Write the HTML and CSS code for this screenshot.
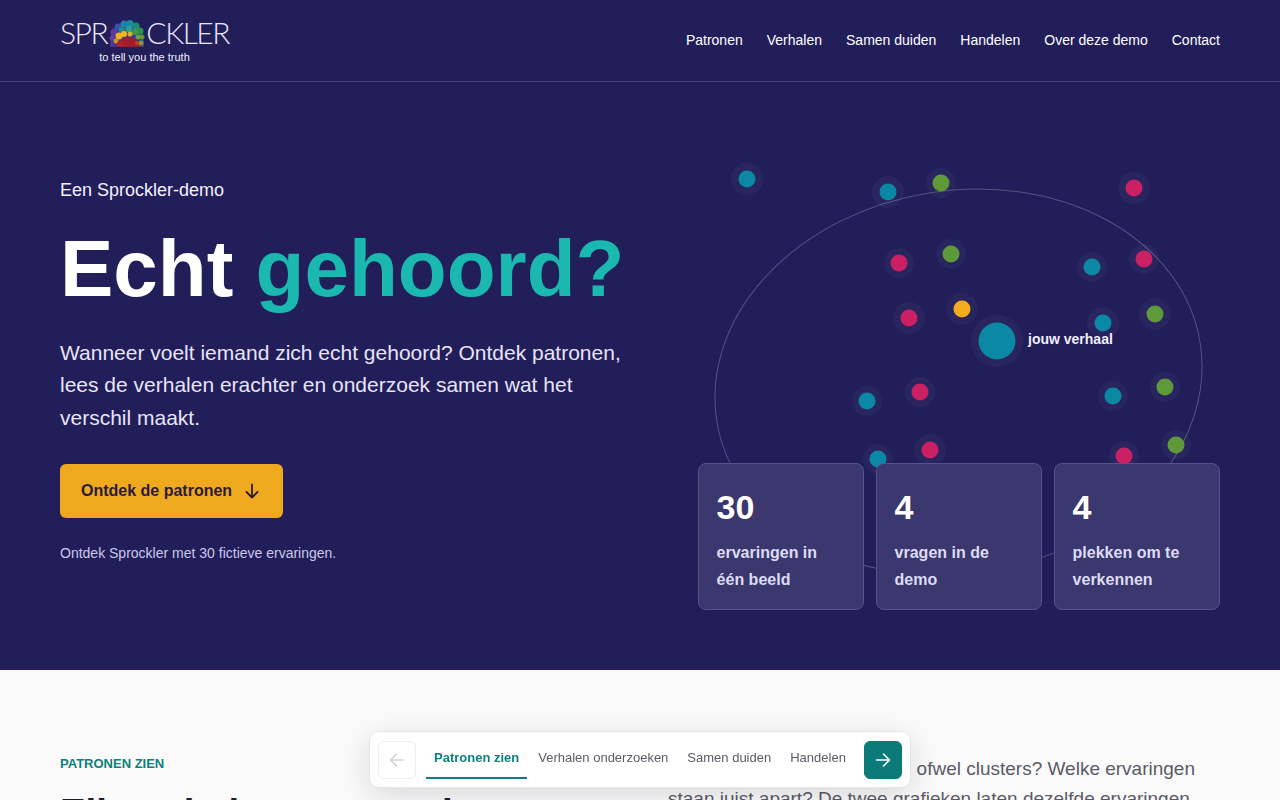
FILE: index.html
```html
<!DOCTYPE html>
<html lang="nl">
<head>
<meta charset="utf-8">
<title>Echt gehoord? Een Sprockler-demo</title>
<link rel="stylesheet" href="styles.css">
</head>
<body>
<header class="site-header">
  <a class="logo" href="#">
    <span class="logo-word">
      <span>SPR</span>
      <svg class="logo-mark" width="36" height="28" viewBox="0 0 36 28" aria-hidden="true">
        <g class="logo-blur">
          <path d="M1 27 Q0 3 18 1 Q36 3 35 27 Z" fill="#3c3a86"/>
          <circle cx="5" cy="12" r="3.500" fill="#5b3c9c"/><circle cx="3" cy="18" r="2.500" fill="#6a3f9e"/>
          <circle cx="4" cy="24" r="2.500" fill="#4a3a8c"/><circle cx="9" cy="7" r="3.500" fill="#3d4ea8"/>
          <circle cx="15" cy="4" r="3.500" fill="#1f7fb0"/><circle cx="21" cy="3.500" r="3.500" fill="#138e9c"/>
          <circle cx="27" cy="6" r="3.500" fill="#1d8d78"/><circle cx="31" cy="11" r="3.500" fill="#2d8f52"/>
          <circle cx="33" cy="17" r="2.500" fill="#5f9a36"/><circle cx="32" cy="23" r="2.500" fill="#8a9a2c"/>
          <circle cx="13" cy="10" r="3" fill="#1f8e8e"/><circle cx="20" cy="9" r="3.500" fill="#2aa08c"/>
          <circle cx="26" cy="12" r="3" fill="#3f9a58"/><circle cx="29" cy="17" r="2.500" fill="#72a038"/>
          <circle cx="10" cy="16" r="3.500" fill="#f2b21e"/><circle cx="15" cy="14" r="3" fill="#f4b820"/>
          <circle cx="7" cy="21" r="2.500" fill="#e08a24"/><circle cx="21" cy="14" r="2.500" fill="#d8b02a"/>
          <path d="M8 27 Q10 18 19 17 Q29 17 31 27 Z" fill="#a31c2a"/>
          <circle cx="11" cy="24" r="3" fill="#b32030"/><circle cx="28" cy="23" r="2" fill="#b8481f"/>
        </g>
      </svg>
      <span>CKLER</span>
    </span>
    <span class="logo-tag">to tell you the truth</span>
  </a>
  <nav class="main-nav">
    <a href="#">Patronen</a>
    <a href="#">Verhalen</a>
    <a href="#">Samen duiden</a>
    <a href="#">Handelen</a>
    <a href="#">Over deze demo</a>
    <a href="#">Contact</a>
  </nav>
</header>

<section class="hero">
  <div class="hero-copy">
    <p class="hero-kicker">Een Sprockler-demo</p>
    <h1 class="hero-title">Echt <span class="accent">gehoord?</span></h1>
    <p class="hero-lead">Wanneer voelt iemand zich echt gehoord? Ontdek patronen, lees de verhalen erachter en onderzoek samen wat het verschil maakt.</p>
    <a class="cta" href="#">Ontdek de patronen
      <svg width="20" height="20" viewBox="0 0 20 20" fill="none" stroke="currentColor" stroke-width="1.800" stroke-linecap="round" stroke-linejoin="round" aria-hidden="true"><path d="M10 3.500v13M4.500 11l5.500 5.500 5.500-5.500"/></svg>
    </a>
    <p class="hero-note">Ontdek Sprockler met 30 fictieve ervaringen.</p>
  </div>
  <div class="hero-visual">
    <svg class="scatter" width="522" height="468" viewBox="698 142 522 468" aria-hidden="true">
      <ellipse class="orbit" cx="958.500" cy="382" rx="244.800" ry="191.400" transform="rotate(-9.400 958.500 382)"/>
      <g class="halos">
        <circle cx="747" cy="179" r="16"/><circle cx="888" cy="192" r="16"/><circle cx="1092" cy="267" r="15"/><circle cx="1103" cy="323" r="16"/><circle cx="867" cy="401" r="15"/><circle cx="1113" cy="396" r="15"/><circle cx="878" cy="459" r="15"/>
        <circle cx="941" cy="183" r="15"/><circle cx="951" cy="254" r="15"/><circle cx="1155" cy="314" r="16"/><circle cx="1165" cy="387" r="15"/><circle cx="1176" cy="445" r="15"/>
        <circle cx="1134" cy="188" r="16"/><circle cx="899" cy="263" r="15"/><circle cx="1144" cy="259" r="15"/><circle cx="909" cy="318" r="16"/><circle cx="920" cy="392" r="15"/><circle cx="930" cy="450" r="16"/><circle cx="1124" cy="456" r="15"/>
        <circle cx="962" cy="309" r="16"/><circle cx="997" cy="341" r="26"/>
      </g>
      <g class="dots-teal">
        <circle cx="747" cy="179" r="8.500"/><circle cx="888" cy="192" r="8.500"/><circle cx="1092" cy="267" r="8.500"/><circle cx="1103" cy="323" r="8.500"/><circle cx="867" cy="401" r="8.500"/><circle cx="1113" cy="396" r="8.500"/><circle cx="878" cy="459" r="8.500"/><circle cx="997" cy="341" r="18.500"/>
      </g>
      <g class="dots-green">
        <circle cx="941" cy="183" r="8.500"/><circle cx="951" cy="254" r="8.500"/><circle cx="1155" cy="314" r="8.500"/><circle cx="1165" cy="387" r="8.500"/><circle cx="1176" cy="445" r="8.500"/>
      </g>
      <g class="dots-pink">
        <circle cx="1134" cy="188" r="8.500"/><circle cx="899" cy="263" r="8.500"/><circle cx="1144" cy="259" r="8.500"/><circle cx="909" cy="318" r="8.500"/><circle cx="920" cy="392" r="8.500"/><circle cx="930" cy="450" r="8.500"/><circle cx="1124" cy="456" r="8.500"/>
      </g>
      <circle class="dot-yellow" cx="962" cy="309" r="8.500"/>
    </svg>
    <span class="scatter-label">jouw verhaal</span>
    <div class="stats">
      <div class="stat"><strong class="stat-num">30</strong><span class="stat-text">ervaringen in één beeld</span></div>
      <div class="stat"><strong class="stat-num">4</strong><span class="stat-text">vragen in de demo</span></div>
      <div class="stat"><strong class="stat-num">4</strong><span class="stat-text">plekken om te verkennen</span></div>
    </div>
  </div>
</section>

<section class="patterns">
  <div class="patterns-head">
    <p class="section-kicker">PATRONEN ZIEN</p>
    <h2 class="section-title">Elke stip is een ervaring</h2>
  </div>
  <p class="section-text">Waar ontstaan dan groepjes, ofwel clusters? Welke ervaringen staan juist apart? De twee grafieken laten dezelfde ervaringen zien.</p>
</section>

<nav class="step-nav">
  <button class="step-btn" type="button" aria-label="Vorige">
    <svg width="18" height="18" viewBox="0 0 18 18" fill="none" stroke="currentColor" stroke-width="1.600" stroke-linecap="round" stroke-linejoin="round"><path d="M15.500 9h-13M8.500 3l-6 6 6 6"/></svg>
  </button>
  <div class="step-tabs">
    <a class="step-tab is-active" href="#">Patronen zien</a>
    <a class="step-tab" href="#">Verhalen onderzoeken</a>
    <a class="step-tab" href="#">Samen duiden</a>
    <a class="step-tab" href="#">Handelen</a>
  </div>
  <button class="step-btn step-btn-next" type="button" aria-label="Volgende">
    <svg width="18" height="18" viewBox="0 0 18 18" fill="none" stroke="currentColor" stroke-width="1.600" stroke-linecap="round" stroke-linejoin="round"><path d="M2.500 9h13M9.500 3l6 6-6 6"/></svg>
  </button>
</nav>
</body>
</html>
```
FILE: styles.css
```css
* { box-sizing: border-box; }
html, body { margin: 0; padding: 0; }
body {
  font-family: "Liberation Sans", Arial, sans-serif;
  background: #fafafa;
  color: #1e1c2e;
}
a { color: inherit; text-decoration: none; }
p, h1, h2 { margin: 0; }

.site-header {
  height: 82px;
  padding: 0 60px;
  display: flex;
  align-items: center;
  justify-content: space-between;
  background: #221e5a;
  border-bottom: 1px solid #45417a;
}
.logo {
  display: flex;
  flex-direction: column;
  align-items: center;
  width: 169px;
  margin-top: -2px;
}
.logo-word {
  display: flex;
  align-items: center;
  justify-content: space-between;
  width: 169px;
  height: 33px;
  font-family: "Lato", sans-serif;
  font-weight: 300;
  font-size: 30px;
  letter-spacing: -1.500px;
  line-height: 33px;
  color: #e9e7f8;
}
.logo-mark { flex: none; margin: 3px 0 0; }
.logo-blur { filter: blur(0.6px); }
.logo-tag {
  margin-top: 1px;
  font-size: 11px;
  line-height: 14px;
  color: #f1effb;
}
.main-nav {
  display: flex;
  gap: 24px;
  margin-top: -2px;
  font-size: 14px;
  color: #fff;
}

.hero {
  height: 588px;
  padding: 60px 60px;
  display: grid;
  grid-template-columns: 578px 522px;
  gap: 60px;
  background: #221e5a;
}
.hero-copy { padding-top: 36px; }
.hero-kicker {
  font-size: 18px;
  line-height: 24px;
  color: #f3f1fc;
}
.hero-title {
  margin-top: 19px;
  font-size: 80px;
  line-height: 96px;
  font-weight: 700;
  color: #fff;
  white-space: nowrap;
}
.accent { color: #1bb8b0; }
.hero-lead {
  margin-top: 19.500px;
  font-size: 21px;
  line-height: 32.800px;
  color: #e7e5f6;
}
.cta {
  margin-top: 29px;
  width: 223px;
  height: 54px;
  display: flex;
  align-items: center;
  gap: 10px;
  padding-left: 21px;
  border-radius: 6px;
  background: #efa91f;
  color: #2a1b38;
  font-size: 16px;
  font-weight: 700;
}
.hero-note {
  margin-top: 26px;
  font-size: 14px;
  line-height: 18px;
  color: #cbc8ea;
}

.hero-visual {
  position: relative;
  display: flex;
  flex-direction: column;
  justify-content: flex-end;
}
.scatter { position: absolute; left: 0; top: 0; }
.orbit { fill: none; stroke: rgba(255, 255, 255, 0.24); stroke-width: 1; }
.halos circle { fill: rgba(255, 255, 255, 0.035); }
.dots-teal circle { fill: #0b89a4; }
.dots-green circle { fill: #5f9a3a; }
.dots-pink circle { fill: #cb2063; }
.dot-yellow { fill: #f5ac1f; }
.scatter-label {
  position: absolute;
  left: 330px;
  top: 189px;
  font-size: 14px;
  line-height: 17px;
  font-weight: 700;
  color: #f1effb;
  text-shadow: 0 0 3px #221e5a;
}
.stats {
  position: relative;
  display: flex;
  gap: 12px;
}
.stat {
  flex: 1 1 0;
  height: 147px;
  padding: 23px 17.600px 0;
  display: flex;
  flex-direction: column;
  border: 1px solid #57538a;
  border-radius: 8px;
  background: #3b376f;
}
.stat-num {
  font-size: 34px;
  line-height: 40px;
  color: #fff;
}
.stat-text {
  margin-top: 12px;
  font-size: 16px;
  line-height: 27px;
  font-weight: 700;
  color: #dedcf4;
}

.patterns {
  padding: 84px 60px 60px;
  display: grid;
  grid-template-columns: 548px 552px;
  gap: 60px;
  background: #fafafa;
}
.section-kicker {
  margin-top: 1px;
  font-size: 13px;
  line-height: 18px;
  font-weight: 700;
  color: #0e7f7c;
}
.section-title {
  margin-top: 16px;
  font-size: 38.400px;
  line-height: 48px;
  font-weight: 700;
  color: #1e1c2e;
}
.section-text {
  font-size: 19px;
  line-height: 29.800px;
  color: #5b5b66;
}

.step-nav {
  position: fixed;
  left: 369px;
  top: 731px;
  width: 542px;
  height: 57px;
  padding: 1px 8px 0;
  display: flex;
  align-items: center;
  gap: 10px;
  background: #fff;
  border: 1px solid #e6e6ea;
  border-radius: 10px;
  box-shadow: 0 8px 30px rgba(20, 20, 50, 0.14);
}
.step-btn {
  flex: none;
  width: 38px;
  height: 38px;
  padding: 0;
  display: flex;
  align-items: center;
  justify-content: center;
  border: 1px solid #eeeeef;
  border-radius: 6px;
  background: #fff;
  color: #d2d2d6;
}
.step-btn-next {
  border-color: #0c7a78;
  background: #0c7a78;
  color: #fff;
}
.step-tabs {
  flex: 1;
  display: flex;
  gap: 3px;
  height: 38px;
}
.step-tab {
  padding: 8px 8px 0;
  font-size: 13px;
  line-height: 17px;
  color: #5b5b66;
  white-space: nowrap;
  border-bottom: 2px solid transparent;
}
.step-tab.is-active {
  font-weight: 700;
  color: #0e7f7c;
  border-bottom-color: #0e7f7c;
}
```
